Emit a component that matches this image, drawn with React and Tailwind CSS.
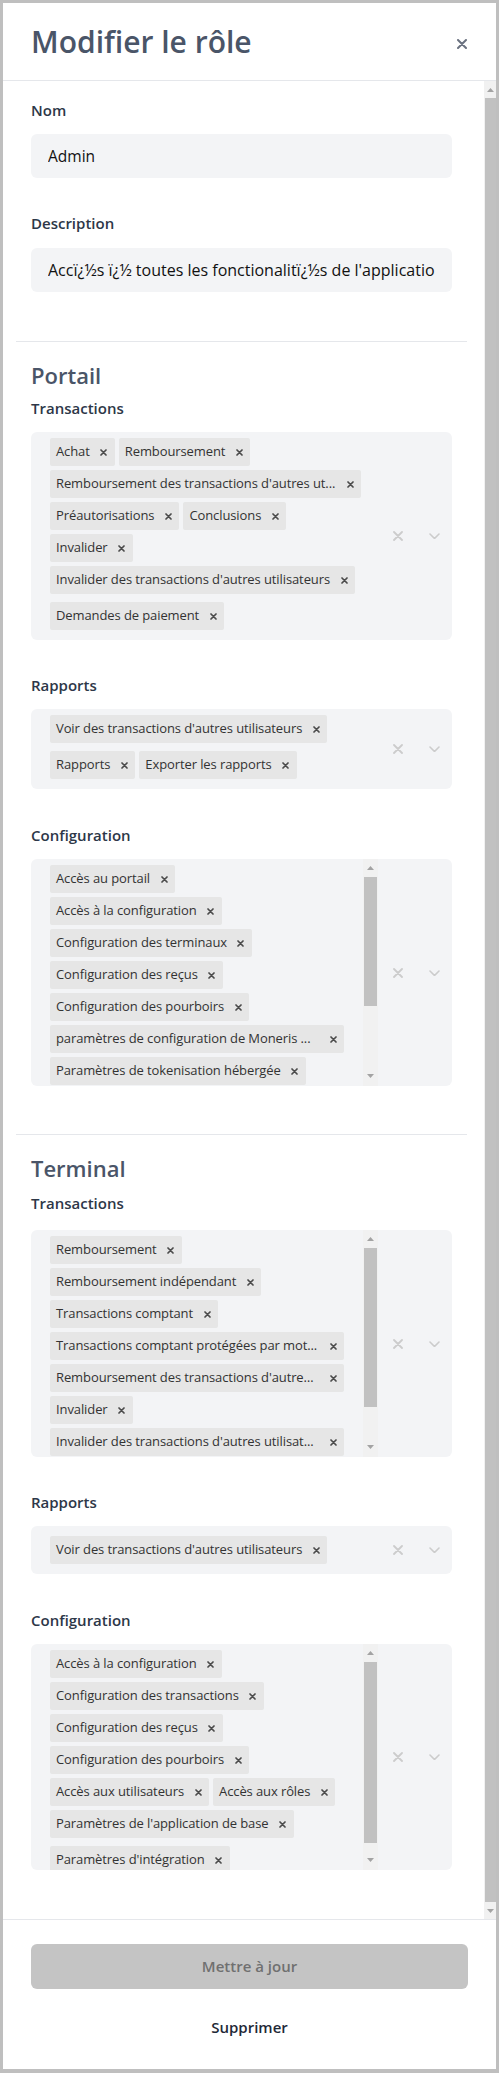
import clsx from 'clsx';

const portailTransactions = [
  ['Achat', 'Remboursement'],
  [{ label: "Remboursement des transactions d'autres ut...", w: 'w-[311px]' }],
  ['Préautorisations', 'Conclusions'],
  ['Invalider'],
  ["Invalider des transactions d'autres utilisateurs"],
  ['Demandes de paiement'],
];

const portailRapports = [
  ["Voir des transactions d'autres utilisateurs"],
  ['Rapports', 'Exporter les rapports'],
];

const portailConfig = [
  ['Accès au portail'],
  ['Accès à la configuration'],
  ['Configuration des terminaux'],
  ['Configuration des reçus'],
  ['Configuration des pourboirs'],
  [{ label: 'paramètres de configuration de Moneris ...', w: 'w-[294px]' }],
  ['Paramètres de tokenisation hébergée'],
];

const terminalTransactions = [
  ['Remboursement'],
  ['Remboursement indépendant'],
  ['Transactions comptant'],
  [{ label: 'Transactions comptant protégées par mot...', w: 'w-[294px]' }],
  [{ label: "Remboursement des transactions d'autres...", w: 'w-[294px]' }],
  ['Invalider'],
  [{ label: "Invalider des transactions d'autres utilisat...", w: 'w-[294px]' }],
];

const terminalRapports = [["Voir des transactions d'autres utilisateurs"]];

const terminalConfig = [
  ['Accès à la configuration'],
  ['Configuration des transactions'],
  ['Configuration des reçus'],
  ['Configuration des pourboirs'],
  ['Accès aux utilisateurs', 'Accès aux rôles'],
  ["Paramètres de l'application de base"],
  ["Paramètres d'intégration"],
];

const UpArrow = () => (
  <svg width="7" height="4" viewBox="0 0 7 4">
    <path d="M3.5 0L7 4H0z" fill="#a3a3a3" />
  </svg>
);

const DownArrow = () => (
  <svg width="7" height="4" viewBox="0 0 7 4">
    <path d="M0 0h7L3.5 4z" fill="#a3a3a3" />
  </svg>
);

const Chip = ({ item }) => {
  const label = typeof item === 'string' ? item : item.label;
  const w = typeof item === 'string' ? null : item.w;
  return (
    <div className={clsx('flex h-[28px] shrink-0 items-center rounded-[2px] bg-[#e6e6e6]', w)}>
      <span className="min-w-0 flex-1 truncate pl-[6px] pr-[3px] text-[13px] tracking-[-0.1px] text-[#333333]">
        {label}
      </span>
      <span className="flex h-full w-[22px] shrink-0 items-center justify-center">
        <svg width="7" height="7" viewBox="0 0 7 7">
          <path d="M1 1l5 5M6 1L1 6" stroke="#4b4b4b" strokeWidth="1.7" strokeLinecap="round" />
        </svg>
      </span>
    </div>
  );
};

const ScrollTrack = ({ thumb }) => (
  <div className="flex w-[15px] shrink-0 flex-col bg-[#f1f1f1]">
    <div className="flex h-[18px] items-center justify-center">
      <UpArrow />
    </div>
    <div className="flex-1 px-[1px]">
      <div className={clsx('w-full bg-[#c1c1c1]', thumb)} />
    </div>
    <div className="flex h-[20px] items-center justify-center">
      <DownArrow />
    </div>
  </div>
);

const MultiSelect = ({ rows, height, thumb, inputRow = true }) => (
  <div className={clsx('flex rounded-[6px] bg-[#f3f4f6]', height)}>
    <div className="flex min-w-0 flex-1 flex-col gap-[4px] overflow-hidden py-[6px] pl-[19px]">
      {rows.map((row, i) => (
        <div
          key={i}
          className={clsx(
            'flex shrink-0 items-center gap-[4px]',
            inputRow && i === rows.length - 1 ? 'h-9' : 'h-[28px]'
          )}
        >
          {row.map((item, j) => (
            <Chip key={j} item={item} />
          ))}
        </div>
      ))}
    </div>
    {thumb && <ScrollTrack thumb={thumb} />}
    <div className={clsx('flex w-[72px] shrink-0 items-center', thumb && 'ml-[2px]')}>
      <div className="flex w-9 justify-center">
        <svg width="10" height="10" viewBox="0 0 10 10">
          <path d="M1 1l8 8M9 1L1 9" stroke="#cccccc" strokeWidth="1.8" strokeLinecap="round" />
        </svg>
      </div>
      <div className="flex w-9 justify-center">
        <svg width="11" height="6" viewBox="0 0 11 6">
          <path d="M1 1l4.5 4.5L10 1" stroke="#cccccc" strokeWidth="1.6" fill="none" strokeLinecap="round" />
        </svg>
      </div>
    </div>
  </div>
);

const Label = ({ children, className }) => (
  <div className={clsx('text-[15px] font-semibold leading-[20px] text-[#2d3748]', className)}>{children}</div>
);

const Heading = ({ children, className }) => (
  <div className={clsx('text-[22px] font-semibold leading-[28px] text-[#4a5568]', className)}>{children}</div>
);

const Divider = ({ className }) => <div className={clsx('-mx-[15px] h-px bg-[#e5e7eb]', className)} />;

export default function App() {
  return (
    <div className="flex h-[2073px] w-[499px] flex-col border-x-[3px] border-t-[3px] border-b-[4px] border-[#bfbfbf] bg-white font-['Open_Sans','Noto_Sans',sans-serif]">
      <div className="flex h-[78px] shrink-0 items-center justify-between border-b border-[#e5e7eb] pl-[28px] pr-[29px]">
        <h1 className="text-[30px] font-semibold leading-[40px] text-[#4a5568]">Modifier le rôle</h1>
        <button className="mt-[4px] flex h-[10px] w-[10px] items-center justify-center">
          <svg width="10" height="10" viewBox="0 0 10 10">
            <path d="M1 1l8 8M9 1L1 9" stroke="#6b7280" strokeWidth="2" strokeLinecap="round" />
          </svg>
        </button>
      </div>

      <div className="flex h-[1838px] shrink-0">
        <div className="w-[481px] overflow-hidden pl-[28px] pr-[32px] pt-[19px]">
          <Label>Nom</Label>
          <input
            readOnly
            value="Admin"
            className="mt-[14px] block h-[44px] w-full rounded-[6px] bg-[#f3f4f6] px-[17px] text-[15.5px] text-[#111111] outline-none"
          />
          <Label className="mt-[35px]">Description</Label>
          <input
            readOnly
            value="Accï¿½s ï¿½ toutes les fonctionalitï¿½s de l'application"
            className="mt-[15px] block h-[44px] w-full rounded-[6px] bg-[#f3f4f6] px-[17px] text-[16px] text-[#111111] outline-none"
          />

          <Divider className="mt-[49px]" />
          <Heading className="mt-[19px]">Portail</Heading>
          <Label className="mt-[9px]">Transactions</Label>
          <div className="mt-[14px]">
            <MultiSelect rows={portailTransactions} />
          </div>
          <Label className="mt-[35px]">Rapports</Label>
          <div className="mt-[14px]">
            <MultiSelect rows={portailRapports} />
          </div>
          <Label className="mt-[36px]">Configuration</Label>
          <div className="mt-[14px]">
            <MultiSelect rows={portailConfig} height="h-[227px]" thumb="h-[129px]" inputRow={false} />
          </div>

          <Divider className="mt-[48px]" />
          <Heading className="mt-[19px]">Terminal</Heading>
          <Label className="mt-[11px]">Transactions</Label>
          <div className="mt-[17px]">
            <MultiSelect rows={terminalTransactions} height="h-[227px]" thumb="h-[159px]" inputRow={false} />
          </div>
          <Label className="mt-[35px]">Rapports</Label>
          <div className="mt-[14px]">
            <MultiSelect rows={terminalRapports} />
          </div>
          <Label className="mt-[36px]">Configuration</Label>
          <div className="mt-[14px]">
            <MultiSelect rows={terminalConfig} height="h-[226px]" thumb="h-[181px]" />
          </div>
        </div>

        <div className="flex w-[12px] shrink-0 flex-col bg-[#f1f1f1]">
          <div className="flex h-[17px] items-center justify-center">
            <UpArrow />
          </div>
          <div className="flex-1 pl-[1px]">
            <div className="h-full w-full bg-[#c1c1c1]" />
          </div>
          <div className="flex h-[17px] items-center justify-center">
            <DownArrow />
          </div>
        </div>
      </div>

      <div className="flex flex-1 flex-col items-center border-t border-[#e5e7eb] px-[28px] pt-[24px]">
        <button className="h-[45px] w-full rounded-[6px] bg-[#c4c4c4] text-[15px] font-semibold text-[#707070]">
          Mettre à jour
        </button>
        <button className="mt-[28px] text-[15px] font-semibold leading-[20px] text-[#1f2937]">Supprimer</button>
      </div>
    </div>
  );
}
